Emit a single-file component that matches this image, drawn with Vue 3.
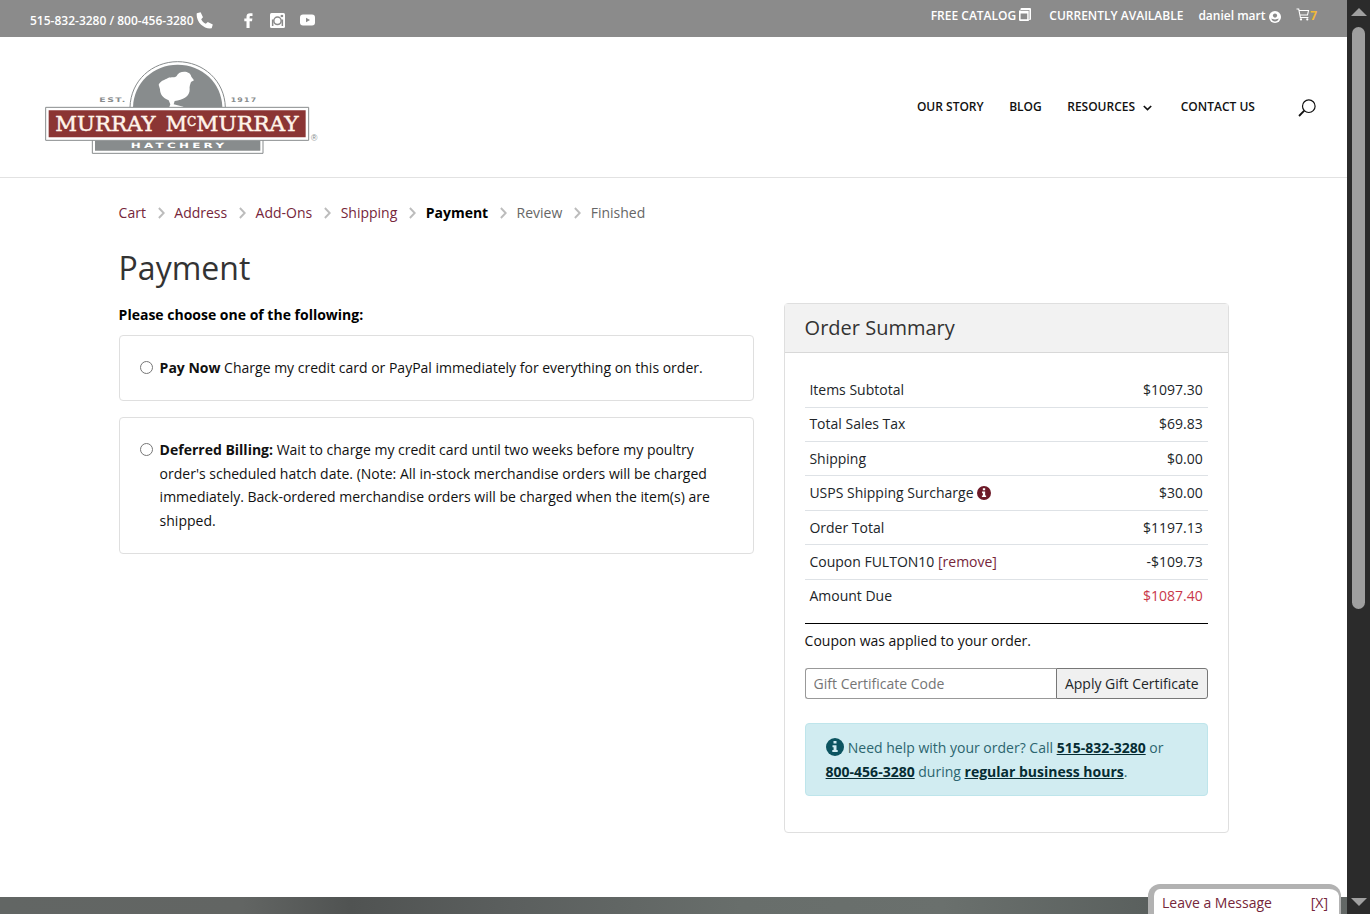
<script setup>
  import { ref } from 'vue';

  const steps = [
    { label: 'Cart', state: 'done' },
    { label: 'Address', state: 'done' },
    { label: 'Add-Ons', state: 'done' },
    { label: 'Shipping', state: 'done' },
    { label: 'Payment', state: 'current' },
    { label: 'Review', state: 'next' },
    { label: 'Finished', state: 'next' },
  ];

  const options = [
    { id: 'now', title: 'Pay Now', text: 'Charge my credit card or PayPal immediately for everything on this order.' },
    { id: 'deferred', title: 'Deferred Billing:', text: 'Wait to charge my credit card until two weeks before my poultry order\'s scheduled hatch date. (Note: All in-stock merchandise orders will be charged immediately. Back-ordered merchandise orders will be charged when the item(s) are shipped.' },
  ];

  const rows = [
    { label: 'Items Subtotal', amount: '$1097.30' },
    { label: 'Total Sales Tax', amount: '$69.83' },
    { label: 'Shipping', amount: '$0.00' },
    { label: 'USPS Shipping Surcharge', amount: '$30.00', info: true },
    { label: 'Order Total', amount: '$1197.13' },
    { label: 'Coupon FULTON10', amount: '-$109.73', removable: true },
    { label: 'Amount Due', amount: '$1087.40', due: true },
  ];

  const billing = ref('');
  const giftCode = ref('');
</script>

<template>
  <div class="window">
    <div class="page">
      <div class="topbar">
        <div class="topbar__left">
          <span class="topbar__phone">515-832-3280 / 800-456-3280</span>
          <svg class="topbar__call" width="17" height="17" viewBox="0 0 17 17">
            <path d="M.8 1.200 4.600.2 7 5.200 5.200 7.200c1 2 2.500 3.500 4.600 4.600l2-1.900 5 2.500-1.100 3.900C8 17.500-.5 9.500.8 1.200z" fill="#fff" />
          </svg>
          <svg class="topbar__fb" width="9" height="15" viewBox="0 0 9 15">
            <path d="M2.500 15V8.300H.3V5.600h2.200V3.800C2.500 1.400 3.800.3 6.200.3h2.300v2.700H6.900c-1 0-1.300.4-1.300 1.200v1.400h2.800L8 8.300H5.600V15z" fill="#fff" />
          </svg>
          <svg class="topbar__ig" width="15" height="15" viewBox="0 0 15 15">
            <rect width="15" height="15" rx="1.500" fill="#fff" />
            <path d="M1.900 6.400h1.500v6.700H1.900zM11.600 6.400h1.500v6.700h-1.500z" fill="#8b8b8b" />
            <circle cx="7.500" cy="7.800" r="3.700" fill="#fff" stroke="#8b8b8b" stroke-width="1.500" />
            <path d="M10.700 1.900h2.400v2.200h-2.400z" fill="#8b8b8b" />
          </svg>
          <svg class="topbar__yt" width="15" height="12" viewBox="0 0 15 12">
            <rect y=".5" width="15" height="11" rx="3" fill="#fff" />
            <path d="M6 3.700v4.600L10 6z" fill="#8b8b8b" />
          </svg>
        </div>
        <div class="topbar__right">
          <span class="topbar__item">FREE CATALOG
            <svg class="topbar__catalog" width="12" height="13" viewBox="0 0 12 13">
              <rect x="1.500" width="10.500" height="12" rx="1" fill="#fff" />
              <path d="M0 2.500h9.800V13H1.200A1.200 1.200 0 0 1 0 11.800z" fill="#fff" />
              <path d="M1.600 5.600h6.600v5.700H1.600zM1.500 2h8.900v9.500h-.7V2.700H1.500z" fill="#8b8b8b" />
            </svg>
          </span>
          <span class="topbar__item">CURRENTLY AVAILABLE</span>
          <span class="topbar__item">daniel mart
            <svg class="topbar__user" width="12" height="12" viewBox="0 0 12 12">
              <circle cx="6" cy="6" r="6" fill="#fff" />
              <circle cx="6" cy="4.600" r="2.100" fill="#8b8b8b" />
              <path d="M2.200 7.600c1 .2 2 .8 3.800.8s2.800-.6 3.800-.8C9.200 9.500 7.800 10.500 6 10.500S2.800 9.500 2.200 7.600z" fill="#8b8b8b" />
            </svg>
          </span>
          <span class="topbar__item topbar__cart">
            <svg width="14" height="13" viewBox="0 0 14 13">
              <path d="M.5 1h2.200l1.700 8.500h8M3 2.500h9.500l-1 4.500H4" fill="none" stroke="#fff" stroke-width="1.100" />
              <circle cx="5" cy="11.400" r="1.100" fill="#fff" />
              <circle cx="11.300" cy="11.400" r="1.100" fill="#fff" />
            </svg>7</span>
        </div>
      </div>

      <header class="header">
        <svg class="logo" width="300" height="128" viewBox="0 0 900 384">
          <path d="M300 172C302 92 366 35 443 35s141 57 143 137" fill="#fff" stroke="#888c8d" stroke-width="3" />
          <path d="M309 172C311 98 370 44 443 44s132 54 134 128z" fill="#888c8d" />
          <path d="M440 78C446 62 480 60 484 80L492 91 483 96C480 104 478 110 479 118 480 140 458 151 434 153L431 163 460 170V173H417L421 163 416 151C398 144 390 132 390 118L386 104C392 92 404 90 414 84 424 80 436 84 440 78z" fill="#fff" />
          <path d="M187 268v42h512v-42" fill="#fff" stroke="#888c8d" stroke-width="3" />
          <path d="M47 172h789v99H47z" fill="#fff" stroke="#888c8d" stroke-width="3" />
          <path d="M56 181h771v81H56z" fill="#8b3534" />
          <path d="M195 272h496v30H195z" fill="#888c8d" />
          <text x="76" y="243" class="logo__name" textLength="301" lengthAdjust="spacingAndGlyphs">MURRAY</text>
          <text x="407" y="243" class="logo__name" textLength="64" lengthAdjust="spacingAndGlyphs">M</text>
          <text x="471" y="227" class="logo__name logo__name--small" textLength="28" lengthAdjust="spacingAndGlyphs">C</text>
          <text x="499" y="243" class="logo__name" textLength="307" lengthAdjust="spacingAndGlyphs">MURRAY</text>
          <text x="302" y="295" class="logo__sub" textLength="290" lengthAdjust="spacingAndGlyphs">HATCHERY</text>
          <text x="208" y="157" class="logo__year" textLength="82" lengthAdjust="spacingAndGlyphs">EST.</text>
          <text x="602" y="157" class="logo__year" textLength="80" lengthAdjust="spacingAndGlyphs">1917</text>
          <text x="843" y="272" class="logo__reg">®</text>
        </svg>
        <nav class="nav">
          <a class="nav__link">OUR STORY</a>
          <a class="nav__link">BLOG</a>
          <a class="nav__link nav__link--parent">RESOURCES
            <svg class="nav__arrow" width="9" height="6" viewBox="0 0 9 6">
              <path d="M.8 1 4.500 4.500 8.200 1" fill="none" stroke="#111" stroke-width="1.700" />
            </svg>
          </a>
          <a class="nav__link">CONTACT US</a>
          <svg class="nav__search" width="18" height="18" viewBox="0 0 18 18">
            <circle cx="10.800" cy="7.200" r="6.300" fill="none" stroke="#111" stroke-width="1.200" />
            <path d="M6.300 11.700 1 17" stroke="#111" stroke-width="1.800" />
          </svg>
        </nav>
      </header>

      <main class="container">
        <div class="steps">
          <template v-for="(step, i) in steps" :key="step.label">
            <svg v-if="i" class="steps__arrow" width="7" height="12" viewBox="0 0 7 12">
              <path d="M.9 1 5.700 6 .9 11" fill="none" stroke="#bcbcbc" stroke-width="1.900" />
            </svg>
            <span :class="`steps__item steps__item--${step.state}`">{{ step.label }}</span>
          </template>
        </div>
        <h1 class="title">Payment</h1>

        <div class="columns">
          <section class="billing">
            <p class="billing__lead">Please choose one of the following:</p>
            <label v-for="option in options" :key="option.id" class="option">
              <input v-model="billing" class="option__radio" type="radio" name="billing" :value="option.id">
              <span><b>{{ option.title }}</b> {{ option.text }}</span>
            </label>
          </section>

          <aside class="summary">
            <h2 class="summary__title">Order Summary</h2>
            <div class="summary__body">
              <div v-for="row in rows" :key="row.label" class="row">
                <span>{{ row.label }}
                  <svg v-if="row.info" class="row__info" width="14" height="14" viewBox="0 0 18 18">
                    <circle cx="9" cy="9" r="9" fill="#6d1a28" />
                    <path d="M7.500 3h3v2.600h-3zM6.500 7.200h4v4.900h1.200v2H6.300v-2h1.300V9.200H6.500z" fill="#fff" />
                  </svg>
                  <a v-if="row.removable" class="row__remove">[remove]</a>
                </span>
                <span :class="{ 'row__due': row.due }">{{ row.amount }}</span>
              </div>
              <p class="summary__notice">Coupon was applied to your order.</p>
              <div class="gift">
                <input v-model="giftCode" class="gift__input" type="text" placeholder="Gift Certificate Code">
                <button class="gift__button">Apply Gift Certificate</button>
              </div>
              <div class="help">
                <svg class="help__icon" width="18" height="18" viewBox="0 0 18 18">
                  <circle cx="9" cy="9" r="9" fill="#0c5460" />
                  <path d="M7.500 3h3v2.600h-3zM6.500 7.200h4v4.900h1.200v2H6.300v-2h1.300V9.200H6.500z" fill="#d1ecf1" />
                </svg>
                Need help with your order? Call <a class="help__link">515-832-3280</a> or <a class="help__link">800-456-3280</a> during <a class="help__link">regular business hours</a>.
              </div>
            </div>
          </aside>
        </div>
      </main>

      <footer class="footer"></footer>
      <div class="chat">
        <span>Leave a Message</span>
        <span>[X]</span>
      </div>
    </div>

    <div class="scrollbar">
      <svg width="16" height="8" viewBox="0 0 16 8"><path d="M8 0 16 8H0z" fill="#a0a0a0" /></svg>
      <div class="scrollbar__thumb"></div>
      <svg class="scrollbar__down" width="16" height="8" viewBox="0 0 16 8"><path d="M0 0h16L8 8z" fill="#a0a0a0" /></svg>
    </div>
  </div>
</template>

<style>
  body {
    margin: 0;
    overflow: hidden;
  }
</style>

<style scoped>
  .window {
    display: flex;
    width: 1370px;
    height: 914px;
    font-family: "Open Sans", sans-serif;
    font-size: 14px;
    line-height: 23.8px;
    color: #111;
    background-color: #fff;
    overflow: hidden;
  }

  .window *, .window {
    box-sizing: border-box;
  }

  .page {
    position: relative;
    display: flex;
    flex-direction: column;
    width: 1347px;
    height: 914px;
  }

  .topbar {
    display: flex;
    justify-content: space-between;
    flex: 0 0 37px;
    padding: 0 30px;
    color: #fff;
    font-size: 12px;
    font-weight: 600;
    background-color: #8b8b8b;
  }

  .topbar__left {
    display: flex;
    align-items: center;
    padding-top: 3px;
  }

  .topbar__phone {
    padding-top: 2px;
  }

  .topbar__call {
    margin-left: 2px;
  }

  .topbar__fb {
    margin-left: 31px;
  }

  .topbar__ig {
    margin-left: 17px;
  }

  .topbar__yt {
    margin-left: 15px;
  }

  .topbar__right {
    display: flex;
    gap: 15px;
    padding-top: 4px;
  }

  .topbar__item {
    white-space: nowrap;
  }

  .topbar__catalog {
    margin-right: 3px;
    vertical-align: -1px;
  }

  .topbar__user {
    vertical-align: -3px;
  }

  .topbar__cart {
    color: #f0b93a;
    font-weight: bold;
  }

  .topbar__cart svg {
    margin-right: 0.5px;
    vertical-align: -1px;
  }

  .header {
    display: flex;
    justify-content: space-between;
    flex: 0 0 141px;
    padding: 13px 30.6px 0 30px;
    border-bottom: 1px solid #e2e2e2;
  }

  .logo {
    margin-bottom: -1px;
  }

  .logo__name {
    font-family: "DejaVu Serif", serif;
    font-size: 61px;
    fill: #fff4ea;
    stroke: #fff4ea;
    stroke-width: 1.4px;
  }

  .logo__name--small {
    font-size: 41px;
  }

  .logo__sub {
    font-family: "DejaVu Sans", sans-serif;
    font-size: 22px;
    font-weight: bold;
    letter-spacing: 6px;
    fill: #fff;
  }

  .logo__year {
    font-family: "DejaVu Sans", sans-serif;
    font-size: 19px;
    font-weight: bold;
    letter-spacing: 3px;
    fill: #888c8d;
  }

  .logo__reg {
    font-family: "Liberation Sans", sans-serif;
    font-size: 26px;
    fill: #888c8d;
  }

  .nav {
    display: flex;
    align-items: center;
    height: 114px;
    font-size: 12px;
    font-weight: 600;
  }

  .nav__link {
    margin-right: 25.5px;
    padding-bottom: 1px;
    white-space: nowrap;
  }

  .nav__link--parent {
    margin-right: 28.5px;
  }

  .nav__arrow {
    margin-left: 5px;
  }

  .nav__search {
    margin: 2px 0 0 18px;
  }

  .container {
    width: 1110px;
    margin-left: 118.6px;
    padding-top: 23.3px;
  }

  .steps {
    display: flex;
    align-items: center;
    height: 24px;
  }

  .steps__arrow {
    margin: 0 9.4px 0 12px;
  }

  .steps__item--done {
    color: #76263a;
  }

  .steps__item--current {
    color: #000;
    font-weight: bold;
  }

  .steps__item--next {
    color: #666;
  }

  .title {
    margin: 24px 0 0;
    color: #333;
    font-size: 32px;
    font-weight: 400;
    line-height: 38px;
  }

  .columns {
    display: flex;
    justify-content: space-between;
    align-items: flex-start;
    margin-top: 16px;
  }

  .billing {
    width: 635px;
  }

  .billing__lead {
    margin: 0 0 8px;
    color: #000;
    font-weight: bold;
  }

  .option {
    display: flex;
    align-items: flex-start;
    margin-bottom: 16px;
    padding: 20px;
    border: 1px solid #dfdfdf;
    border-radius: 4px;
  }

  .option__radio {
    flex: 0 0 13px;
    height: 13px;
    margin: 5px 7px 0 0;
  }

  .summary {
    width: 445px;
    height: 530px;
    border: 1px solid #dfdfdf;
    border-radius: 4px;
  }

  .summary__title {
    height: 49px;
    margin: 0;
    padding-left: 20px;
    color: #333;
    font-size: 20px;
    font-weight: 400;
    line-height: 47px;
    border-bottom: 1px solid #d8d8d8;
    background-color: #f2f2f2;
  }

  .summary__body {
    padding: 19px 20px 20px;
  }

  .row {
    display: flex;
    justify-content: space-between;
    padding: 4.8px;
    color: #212529;
    border-top: 1px solid #dee2e6;
  }

  .row:first-child {
    border-top-color: transparent;
  }

  .row__info {
    vertical-align: -2px;
  }

  .row__remove {
    color: #76263a;
  }

  .row__due {
    color: #c9374a;
  }

  .summary__notice {
    margin: 10px 0 0;
    padding-top: 5px;
    border-top: 1px solid #000;
  }

  .gift {
    display: flex;
    height: 31px;
    margin-top: 15px;
  }

  .gift__input {
    width: 251.4px;
    padding: 1px 8px 0;
    font: inherit;
    border: 1px solid #999;
    border-right: 0;
    border-radius: 3px 0 0 3px;
  }

  .gift__input::placeholder {
    color: #757575;
  }

  .gift__button {
    flex: 1;
    padding: 1px 0 0;
    color: #212529;
    font: inherit;
    white-space: nowrap;
    border: 1px solid #777;
    border-radius: 0 3px 3px 0;
    background-color: #f0f0f0;
  }

  .help {
    height: 73px;
    margin-top: 24px;
    padding: 12px 20px;
    color: #2c656f;
    border: 1px solid #bee5eb;
    border-radius: 4px;
    background-color: #d1ecf1;
  }

  .help__icon {
    margin-right: 0.5px;
    vertical-align: -3px;
  }

  .help__link {
    color: #062c33;
    font-weight: bold;
    text-decoration: underline;
  }

  .footer {
    height: 17px;
    margin-top: auto;
    background: linear-gradient(90deg, #626664 0%, #626563 18%, #505352 26%, #5b5f5e 38%, #686e6b 55%, #6a706d 70%, #575d5b 88%, #636866 100%);
  }

  .chat {
    position: absolute;
    right: 6px;
    bottom: 0;
    display: flex;
    justify-content: space-between;
    width: 193px;
    height: 30px;
    padding: 2px 11px 0 8px;
    color: #76263a;
    border: 5px solid #b2b2b2;
    border-right-width: 2px;
    border-bottom: 0;
    border-left-width: 6px;
    border-radius: 12px 12px 0 0;
    background-color: #fff;
  }

  .scrollbar {
    display: flex;
    flex-direction: column;
    align-items: center;
    width: 23px;
    padding: 8px 0;
    background-color: #2b2b2b;
  }

  .scrollbar__thumb {
    width: 13px;
    height: 582px;
    margin-top: 11px;
    border-radius: 7px;
    background-color: #9f9f9f;
  }

  .scrollbar__down {
    margin-top: auto;
  }
</style>
